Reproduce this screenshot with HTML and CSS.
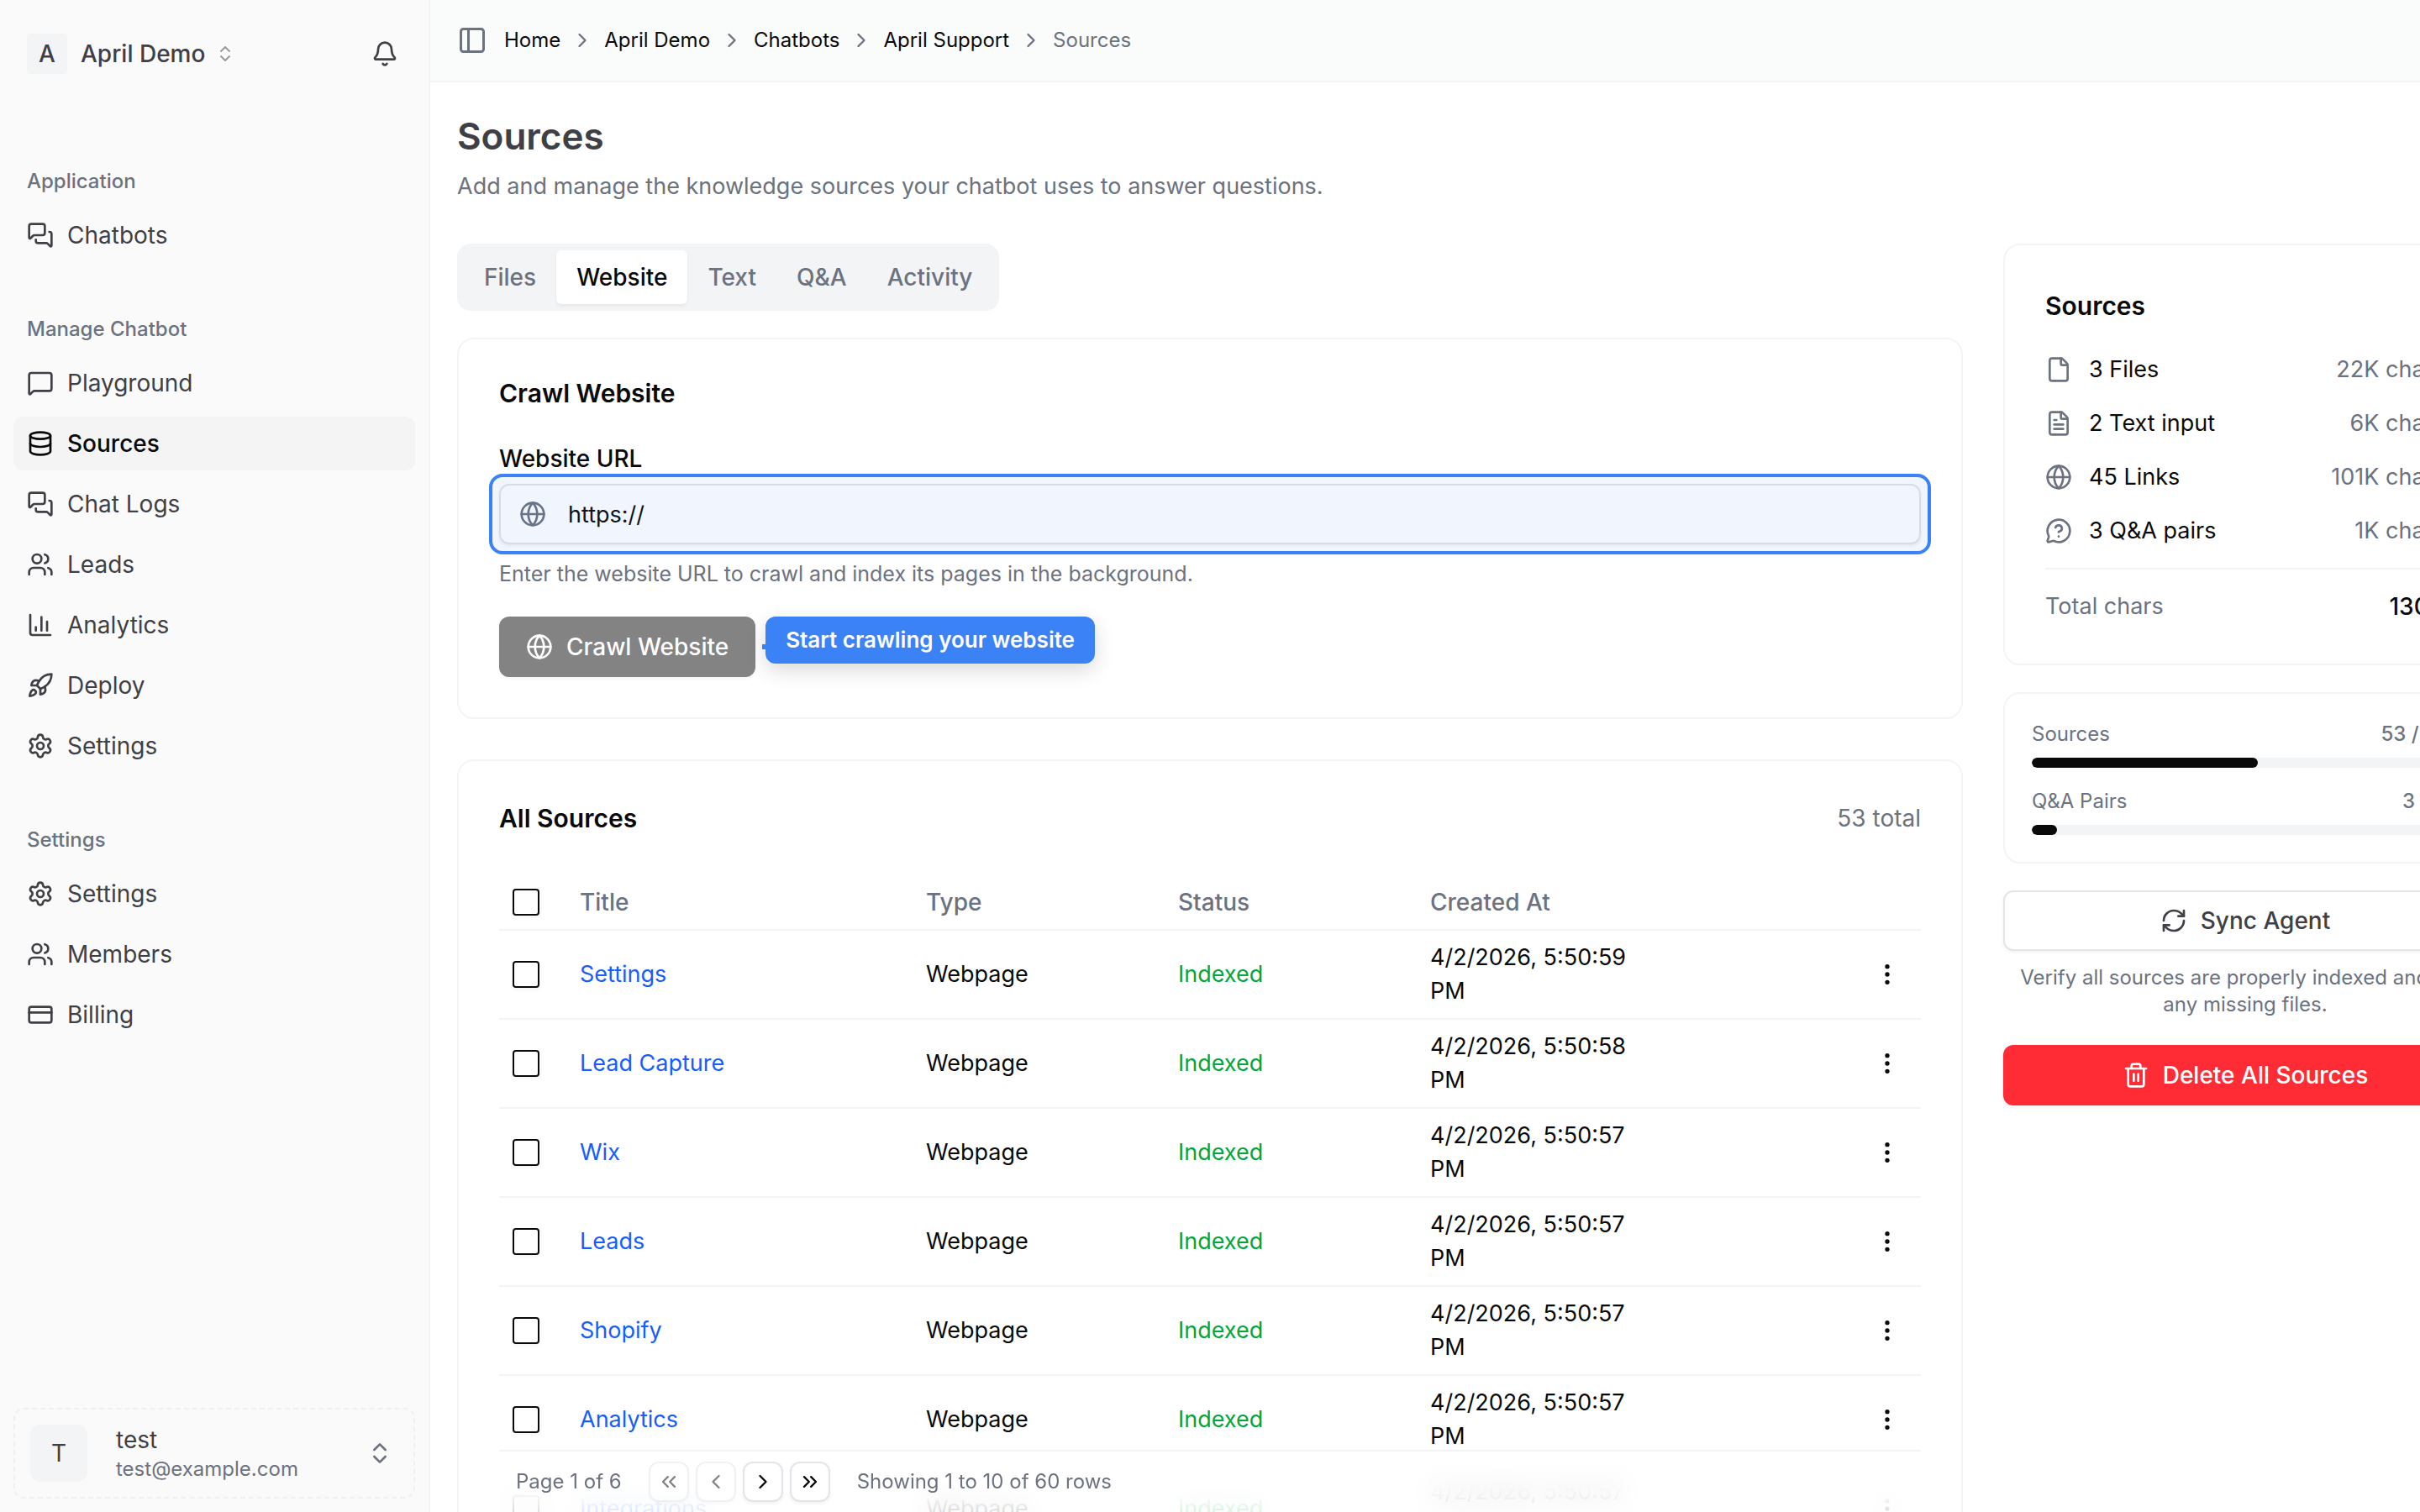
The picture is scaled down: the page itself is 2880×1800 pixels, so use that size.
FILE: index.html
```html
<!DOCTYPE html>
<html lang="en">
<head>
<meta charset="utf-8">
<title>Sources</title>
<link rel="stylesheet" href="styles.css">
</head>
<body>
<svg class="sprite" aria-hidden="true">
  <symbol id="chats" viewBox="0 0 24 24"><path d="M16 10a2 2 0 0 1-2 2H6.828a2 2 0 0 0-1.414.586l-2.202 2.202A.71.71 0 0 1 2 14.286V4a2 2 0 0 1 2-2h10a2 2 0 0 1 2 2z"/><path d="M20 9a2 2 0 0 1 2 2v10.286a.71.71 0 0 1-1.212.502l-2.202-2.202A2 2 0 0 0 17.172 19H10a2 2 0 0 1-2-2v-1"/></symbol>
  <symbol id="chat" viewBox="0 0 24 24"><path d="M22 17a2 2 0 0 1-2 2H6.828a2 2 0 0 0-1.414.586l-2.202 2.202A.71.71 0 0 1 2 21.286V5a2 2 0 0 1 2-2h16a2 2 0 0 1 2 2z"/></symbol>
  <symbol id="database" viewBox="0 0 24 24"><ellipse cx="12" cy="5" rx="9" ry="3"/><path d="M3 5v14a9 3 0 0 0 18 0V5"/><path d="M3 12a9 3 0 0 0 18 0"/></symbol>
  <symbol id="users" viewBox="0 0 24 24"><path d="M16 21v-2a4 4 0 0 0-4-4H6a4 4 0 0 0-4 4v2"/><path d="M16 3.128a4 4 0 0 1 0 7.744"/><path d="M22 21v-2a4 4 0 0 0-3-3.87"/><circle cx="9" cy="7" r="4"/></symbol>
  <symbol id="chart" viewBox="0 0 24 24"><path d="M3 3v16a2 2 0 0 0 2 2h16"/><path d="M18 17V9"/><path d="M13 17V5"/><path d="M8 17v-3"/></symbol>
  <symbol id="rocket" viewBox="0 0 24 24"><path d="M4.5 16.5c-1.5 1.26-2 5-2 5s3.74-.5 5-2c.71-.84.7-2.13-.09-2.91a2.18 2.18 0 0 0-2.91-.09z"/><path d="m12 15-3-3a22 22 0 0 1 2-3.95A12.88 12.88 0 0 1 22 2c0 2.72-.78 7.5-6 11a22.35 22.35 0 0 1-4 2z"/><path d="M9 12H4s.55-3.03 2-4c1.62-1.08 5 0 5 0"/><path d="M12 15v5s3.03-.55 4-2c1.08-1.62 0-5 0-5"/></symbol>
  <symbol id="gear" viewBox="0 0 24 24"><path d="M9.671 4.136a2.34 2.34 0 0 1 4.659 0 2.34 2.34 0 0 0 3.319 1.915 2.34 2.34 0 0 1 2.33 4.033 2.34 2.34 0 0 0 0 3.831 2.34 2.34 0 0 1-2.33 4.033 2.34 2.34 0 0 0-3.319 1.915 2.34 2.34 0 0 1-4.659 0 2.34 2.34 0 0 0-3.32-1.915 2.34 2.34 0 0 1-2.33-4.033 2.34 2.34 0 0 0 0-3.831A2.34 2.34 0 0 1 6.35 6.051a2.34 2.34 0 0 0 3.319-1.915"/><circle cx="12" cy="12" r="3"/></symbol>
  <symbol id="card" viewBox="0 0 24 24"><rect width="20" height="14" x="2" y="5" rx="2"/><path d="M2 10h20"/></symbol>
  <symbol id="updown" viewBox="0 0 24 24"><path d="m7 15 5 5 5-5"/><path d="m7 9 5-5 5 5"/></symbol>
  <symbol id="bell" viewBox="0 0 24 24"><path d="M10.268 21a2 2 0 0 0 3.464 0"/><path d="M3.262 15.326A1 1 0 0 0 4 17h16a1 1 0 0 0 .74-1.673C19.41 13.956 18 12.499 18 8A6 6 0 0 0 6 8c0 4.499-1.411 5.956-2.738 7.326"/></symbol>
  <symbol id="panel" viewBox="0 0 24 24"><rect width="18" height="18" x="3" y="3" rx="2"/><path d="M9 3v18"/></symbol>
  <symbol id="right" viewBox="0 0 24 24"><path d="m9 18 6-6-6-6"/></symbol>
  <symbol id="left" viewBox="0 0 24 24"><path d="m15 18-6-6 6-6"/></symbol>
  <symbol id="first" viewBox="0 0 24 24"><path d="m11 17-5-5 5-5"/><path d="m18 17-5-5 5-5"/></symbol>
  <symbol id="last" viewBox="0 0 24 24"><path d="m6 17 5-5-5-5"/><path d="m13 17 5-5-5-5"/></symbol>
  <symbol id="globe" viewBox="0 0 24 24"><circle cx="12" cy="12" r="10"/><path d="M12 2a14.5 14.5 0 0 0 0 20 14.5 14.5 0 0 0 0-20"/><path d="M2 12h20"/></symbol>
  <symbol id="file" viewBox="0 0 24 24"><path d="M6 22a2 2 0 0 1-2-2V4a2 2 0 0 1 2-2h8a2.4 2.4 0 0 1 1.704.706l3.588 3.588A2.4 2.4 0 0 1 20 8v12a2 2 0 0 1-2 2z"/><path d="M14 2v5a1 1 0 0 0 1 1h5"/></symbol>
  <symbol id="filetext" viewBox="0 0 24 24"><path d="M6 22a2 2 0 0 1-2-2V4a2 2 0 0 1 2-2h8a2.4 2.4 0 0 1 1.704.706l3.588 3.588A2.4 2.4 0 0 1 20 8v12a2 2 0 0 1-2 2z"/><path d="M14 2v5a1 1 0 0 0 1 1h5"/><path d="M10 9H8"/><path d="M16 13H8"/><path d="M16 17H8"/></symbol>
  <symbol id="question" viewBox="0 0 24 24"><path d="M2.992 16.342a2 2 0 0 1 .094 1.167l-1.065 3.29a1 1 0 0 0 1.236 1.168l3.413-.998a2 2 0 0 1 1.099.092 10 10 0 1 0-4.777-4.719"/><path d="M9.09 9a3 3 0 0 1 5.83 1c0 2-3 3-3 3"/><path d="M12 17h.01"/></symbol>
  <symbol id="sync" viewBox="0 0 24 24"><path d="M3 12a9 9 0 0 1 9-9 9.75 9.75 0 0 1 6.74 2.74L21 8"/><path d="M21 3v5h-5"/><path d="M21 12a9 9 0 0 1-9 9 9.75 9.75 0 0 1-6.74-2.74L3 16"/><path d="M8 16H3v5"/></symbol>
  <symbol id="trash" viewBox="0 0 24 24"><path d="M10 11v6"/><path d="M14 11v6"/><path d="M19 6v14a2 2 0 0 1-2 2H7a2 2 0 0 1-2-2V6"/><path d="M3 6h18"/><path d="M8 6V4a2 2 0 0 1 2-2h4a2 2 0 0 1 2 2v2"/></symbol>
  <symbol id="dots" viewBox="0 0 24 24"><circle cx="12" cy="12" r="1"/><circle cx="12" cy="5" r="1"/><circle cx="12" cy="19" r="1"/></symbol>
</svg>
<div class="app">
  <aside class="sidebar">
    <div class="workspace">
      <button class="workspace-button" type="button"><span class="workspace-avatar">A</span>April Demo<svg class="icon icon-small faint"><use href="#updown"/></svg></button>
      <button class="plain" type="button" aria-label="Notifications"><svg class="icon"><use href="#bell"/></svg></button>
    </div>
    <nav class="nav">
      <section class="nav-group">
        <h2 class="nav-label">Application</h2>
        <a class="nav-item" href="#"><svg class="icon"><use href="#chats"/></svg>Chatbots</a>
      </section>
      <section class="nav-group">
        <h2 class="nav-label">Manage Chatbot</h2>
        <a class="nav-item" href="#"><svg class="icon"><use href="#chat"/></svg>Playground</a>
        <a class="nav-item active" href="#"><svg class="icon"><use href="#database"/></svg>Sources</a>
        <a class="nav-item" href="#"><svg class="icon"><use href="#chats"/></svg>Chat Logs</a>
        <a class="nav-item" href="#"><svg class="icon"><use href="#users"/></svg>Leads</a>
        <a class="nav-item" href="#"><svg class="icon"><use href="#chart"/></svg>Analytics</a>
        <a class="nav-item" href="#"><svg class="icon"><use href="#rocket"/></svg>Deploy</a>
        <a class="nav-item" href="#"><svg class="icon"><use href="#gear"/></svg>Settings</a>
      </section>
      <section class="nav-group">
        <h2 class="nav-label">Settings</h2>
        <a class="nav-item" href="#"><svg class="icon"><use href="#gear"/></svg>Settings</a>
        <a class="nav-item" href="#"><svg class="icon"><use href="#users"/></svg>Members</a>
        <a class="nav-item" href="#"><svg class="icon"><use href="#card"/></svg>Billing</a>
      </section>
    </nav>
    <button class="account" type="button">
      <span class="account-avatar">T</span>
      <span class="account-text"><span>test</span><span class="account-mail">test@example.com</span></span>
      <svg class="icon muted"><use href="#updown"/></svg>
    </button>
  </aside>

  <div class="main">
    <header class="topbar">
      <button class="plain muted" type="button" aria-label="Toggle sidebar"><svg class="icon icon-large"><use href="#panel"/></svg></button>
      <nav class="crumbs" aria-label="Breadcrumb">
        <a href="#">Home</a><svg class="icon icon-crumb"><use href="#right"/></svg>
        <a href="#">April Demo</a><svg class="icon icon-crumb"><use href="#right"/></svg>
        <a href="#">Chatbots</a><svg class="icon icon-crumb"><use href="#right"/></svg>
        <a href="#">April Support</a><svg class="icon icon-crumb"><use href="#right"/></svg>
        <span class="crumb-current">Sources</span>
      </nav>
    </header>

    <main class="content">
      <h1 class="title">Sources</h1>
      <p class="subtitle">Add and manage the knowledge sources your chatbot uses to answer questions.</p>

      <div class="columns">
        <div class="primary">
          <div class="tabs" role="tablist">
            <button class="tab" role="tab" type="button">Files</button>
            <button class="tab selected" role="tab" type="button" aria-selected="true">Website</button>
            <button class="tab" role="tab" type="button">Text</button>
            <button class="tab" role="tab" type="button">Q&amp;A</button>
            <button class="tab" role="tab" type="button">Activity</button>
          </div>

          <section class="panel crawl">
            <h2 class="crawl-title">Crawl Website</h2>
            <form class="crawl-form">
              <label class="field-label" for="url">Website URL</label>
              <div class="field">
                <svg class="icon field-icon"><use href="#globe"/></svg>
                <input class="field-input" id="url" type="text" value="https://">
              </div>
              <p class="help">Enter the website URL to crawl and index its pages in the background.</p>
              <div class="crawl-action">
                <button class="button crawl-button" type="button" disabled><svg class="icon"><use href="#globe"/></svg>Crawl Website</button>
                <div class="tip" role="tooltip">Start crawling your website</div>
              </div>
            </form>
          </section>

          <section class="panel list">
            <div class="list-head">
              <h2 class="panel-title">All Sources</h2>
              <span class="list-count">53 total</span>
            </div>
            <table class="table">
              <colgroup><col class="col-check"><col class="col-title"><col class="col-data"><col class="col-data"><col class="col-data"><col class="col-data"></colgroup>
              <thead>
                <tr><th><input class="check" type="checkbox" aria-label="Select all"></th><th>Title</th><th>Type</th><th>Status</th><th>Created At</th><th></th></tr>
              </thead>
              <tbody>
                <tr><td><input class="check" type="checkbox" aria-label="Select Settings"></td><td><a href="#">Settings</a></td><td>Webpage</td><td class="ok">Indexed</td><td>4/2/2026, 5:50:59 PM</td><td class="actions"><button class="row-menu" type="button" aria-label="Row actions"><svg class="icon"><use href="#dots"/></svg></button></td></tr>
                <tr><td><input class="check" type="checkbox" aria-label="Select Lead Capture"></td><td><a href="#">Lead Capture</a></td><td>Webpage</td><td class="ok">Indexed</td><td>4/2/2026, 5:50:58 PM</td><td class="actions"><button class="row-menu" type="button" aria-label="Row actions"><svg class="icon"><use href="#dots"/></svg></button></td></tr>
                <tr><td><input class="check" type="checkbox" aria-label="Select Wix"></td><td><a href="#">Wix</a></td><td>Webpage</td><td class="ok">Indexed</td><td>4/2/2026, 5:50:57 PM</td><td class="actions"><button class="row-menu" type="button" aria-label="Row actions"><svg class="icon"><use href="#dots"/></svg></button></td></tr>
                <tr><td><input class="check" type="checkbox" aria-label="Select Leads"></td><td><a href="#">Leads</a></td><td>Webpage</td><td class="ok">Indexed</td><td>4/2/2026, 5:50:57 PM</td><td class="actions"><button class="row-menu" type="button" aria-label="Row actions"><svg class="icon"><use href="#dots"/></svg></button></td></tr>
                <tr><td><input class="check" type="checkbox" aria-label="Select Shopify"></td><td><a href="#">Shopify</a></td><td>Webpage</td><td class="ok">Indexed</td><td>4/2/2026, 5:50:57 PM</td><td class="actions"><button class="row-menu" type="button" aria-label="Row actions"><svg class="icon"><use href="#dots"/></svg></button></td></tr>
                <tr><td><input class="check" type="checkbox" aria-label="Select Analytics"></td><td><a href="#">Analytics</a></td><td>Webpage</td><td class="ok">Indexed</td><td>4/2/2026, 5:50:57 PM</td><td class="actions"><button class="row-menu" type="button" aria-label="Row actions"><svg class="icon"><use href="#dots"/></svg></button></td></tr>
                <tr><td><input class="check" type="checkbox" aria-label="Select Integrations"></td><td><a href="#">Integrations</a></td><td>Webpage</td><td class="ok">Indexed</td><td>4/2/2026, 5:50:57 PM</td><td class="actions"><button class="row-menu" type="button" aria-label="Row actions"><svg class="icon"><use href="#dots"/></svg></button></td></tr>
              </tbody>
            </table>
            <div class="pager">
              <span>Page 1 of 6</span>
              <div class="pager-buttons">
                <button class="page-button" type="button" aria-label="First page" disabled><svg class="icon icon-page"><use href="#first"/></svg></button>
                <button class="page-button" type="button" aria-label="Previous page" disabled><svg class="icon icon-page"><use href="#left"/></svg></button>
                <button class="page-button" type="button" aria-label="Next page"><svg class="icon icon-page"><use href="#right"/></svg></button>
                <button class="page-button" type="button" aria-label="Last page"><svg class="icon icon-page"><use href="#last"/></svg></button>
              </div>
              <span>Showing 1 to 10 of 60 rows</span>
            </div>
          </section>
        </div>

        <aside class="secondary">
          <section class="panel summary">
            <h2 class="panel-title summary-title">Sources</h2>
            <div class="summary-row"><svg class="icon muted"><use href="#file"/></svg><span>3 Files</span><span class="summary-value">22K chars</span></div>
            <div class="summary-row"><svg class="icon muted"><use href="#filetext"/></svg><span>2 Text input</span><span class="summary-value">6K chars</span></div>
            <div class="summary-row"><svg class="icon muted"><use href="#globe"/></svg><span>45 Links</span><span class="summary-value">101K chars</span></div>
            <div class="summary-row"><svg class="icon muted"><use href="#question"/></svg><span>3 Q&amp;A pairs</span><span class="summary-value">1K chars</span></div>
            <div class="summary-total"><span class="muted">Total chars</span><strong class="total">130K</strong></div>
          </section>
          <section class="panel usage">
            <div class="meter">
              <div class="meter-head"><span>Sources</span><span class="meter-value">53 / 100</span></div>
              <div class="bar"><div class="bar-fill" style="width:53%"></div></div>
            </div>
            <div class="meter">
              <div class="meter-head"><span>Q&amp;A Pairs</span><span class="meter-value">3 / 50</span></div>
              <div class="bar"><div class="bar-fill" style="width:6%"></div></div>
            </div>
          </section>
          <div class="sync">
            <button class="button sync-button" type="button"><svg class="icon"><use href="#sync"/></svg>Sync Agent</button>
            <p class="sync-note">Verify all sources are properly indexed and add any missing files.</p>
          </div>
          <button class="button delete-button" type="button"><svg class="icon"><use href="#trash"/></svg>Delete All Sources</button>
        </aside>
      </div>
    </main>
  </div>
</div>
</body>
</html>
```
FILE: styles.css
```css
* { box-sizing: border-box; }

body {
  margin: 0;
  color: #0a0a0a;
  background: #fff;
  font: 400 27px/40px Inter, "Liberation Sans", sans-serif;
}

h1, h2, p { margin: 0; }
a { color: inherit; text-decoration: none; }
button, input { font: inherit; color: inherit; }
button { border: 0; padding: 0; background: none; }

.sprite { position: absolute; width: 0; height: 0; }

.icon {
  width: 32px;
  height: 32px;
  flex: none;
  display: block;
  fill: none;
  stroke: currentColor;
  stroke-width: 2;
  stroke-linecap: round;
  stroke-linejoin: round;
}
.icon-small { width: 24px; height: 24px; }
.icon-large { width: 36px; height: 36px; }
.icon-crumb, .icon-page { width: 28px; height: 28px; }
.muted { color: #6b7280; }
.faint { opacity: .5; }
.plain { display: flex; }

.app { display: flex; height: 100vh; overflow: hidden; }

/* Sidebar */
.sidebar {
  width: 512px;
  flex: none;
  display: flex;
  flex-direction: column;
  background: #fafafa;
  border-right: 2px solid #f3f4f6;
  color: #3f3f46;
  font-size: 28px;
}
.workspace {
  display: flex;
  align-items: center;
  justify-content: space-between;
  padding: 32px 36px 72px 32px;
}
.workspace-button { display: flex; align-items: center; gap: 16px; height: 64px; font-weight: 500; }
.workspace-button .icon { margin-left: -4px; }
.workspace-avatar {
  width: 48px;
  height: 48px;
  display: grid;
  place-items: center;
  border-radius: 4px;
  background: #f3f4f6;
}
.nav { flex: 1; display: flex; flex-direction: column; gap: 16px; }
.nav-group { display: flex; flex-direction: column; gap: 8px; padding: 16px; }
.nav-label {
  margin-bottom: -8px;
  padding-left: 16px;
  color: #6b7280;
  font-size: 24px;
  font-weight: 500;
  line-height: 64px;
}
.nav-item {
  display: flex;
  align-items: center;
  gap: 16px;
  height: 64px;
  padding: 0 16px;
  border-radius: 12px;
}
.nav-item.active { background: #f4f4f4; color: #0a0a0a; font-weight: 500; }
.account {
  display: flex;
  align-items: center;
  margin: 16px;
  height: 108px;
  padding: 0 24px 0 18px;
  border: 2px dashed #f0f0f1;
  border-radius: 12px;
  text-align: left;
}
.account-avatar {
  width: 68px;
  height: 68px;
  display: grid;
  place-items: center;
  margin-right: 34px;
  border-radius: 12px;
  background: #f3f4f6;
}
.account-text { flex: 1; display: grid; line-height: 38px; }
.account-mail { color: #6b7280; font-size: 24px; line-height: 32px; }

/* Top bar */
.main { flex: 1; min-width: 0; display: flex; flex-direction: column; }
.topbar {
  display: flex;
  align-items: center;
  gap: 20px;
  height: 98px;
  flex: none;
  padding: 0 32px;
  background: #fafcfb;
  border-bottom: 2px solid #f3f4f6;
}
.crumbs { display: flex; align-items: center; gap: 12px; font-size: 24px; }
.crumbs .icon, .crumb-current { color: #6b7280; }

/* Page */
.content { flex: 1; min-height: 0; overflow: hidden; padding: 32px; }
.title { color: #3f3f46; font-size: 44px; font-weight: 600; line-height: 64px; }
.subtitle { margin: 8px 0 48px; color: #6b7280; }
.columns {
  display: grid;
  grid-template-columns: calc(100% - 512px) 576px;
  gap: 48px;
  align-items: start;
}
.primary { display: flex; flex-direction: column; align-items: stretch; }

.tabs {
  align-self: flex-start;
  display: flex;
  height: 80px;
  padding: 8px;
  margin-bottom: 32px;
  border-radius: 16px;
  background: #f3f4f6;
}
.tab { padding: 0 24px; border-radius: 6px; color: #6b7280; font-size: 28px; font-weight: 500; }
.tab.selected { background: #fff; color: #0a0a0a; box-shadow: 0 2px 4px rgb(0 0 0 / 6%); }

.panel { border: 2px solid #f3f4f6; border-radius: 20px; background: #fff; padding: 48px; }
.panel-title, .crawl-title { font-size: 30px; font-weight: 600; }

.crawl { margin-bottom: 48px; }
.crawl-title { line-height: 32px; margin-bottom: 48px; }
.field-label { display: block; font-size: 28px; font-weight: 500; line-height: 28px; margin-bottom: 16px; }
.field { position: relative; display: flex; align-items: center; }
.field::after {
  content: "";
  position: absolute;
  inset: -12px;
  border: 4px solid #3b82f6;
  border-radius: 16px;
  background: rgb(59 130 246 / 8%);
  background-clip: padding-box;
  pointer-events: none;
}
.field-icon { position: absolute; left: 24px; color: #6b7280; }
.field-input {
  flex: 1;
  min-width: 0;
  height: 72px;
  padding: 0 24px 0 80px;
  border: 2px solid #e4e4e9;
  border-radius: 12px;
  background: #fff;
  box-shadow: 0 2px 4px rgb(0 0 0 / 6%);
  outline: 0;
}
.help { margin: 16px 0 32px; color: #6b7280; font-size: 25px; line-height: 38px; }
.crawl-action { position: relative; display: flex; width: max-content; }

.button {
  display: flex;
  align-items: center;
  justify-content: center;
  gap: 16px;
  height: 72px;
  padding: 0 32px;
  border-radius: 12px;
  font-size: 28px;
  font-weight: 500;
  box-shadow: 0 2px 4px rgb(0 0 0 / 5%);
}
.crawl-button { background: #838383; color: #fff; }
.tip {
  position: absolute;
  left: calc(100% + 12px);
  top: 0;
  padding: 0 24px;
  border-radius: 12px;
  background: #3b82f6;
  color: #fff;
  font-size: 26px;
  font-weight: 600;
  line-height: 56px;
  white-space: nowrap;
  box-shadow: 0 8px 24px rgb(0 0 0 / 15%);
}
.tip::before {
  content: "";
  position: absolute;
  left: -4px;
  top: 33px;
  width: 6px;
  height: 6px;
  background: #3b82f6;
}

/* Table */
.list { padding-bottom: 0; }
.list-head { display: flex; justify-content: space-between; margin-bottom: 48px; }
.list-count { color: #6b7280; font-size: 28px; }
.table { width: 100%; table-layout: fixed; border-collapse: separate; border-spacing: 0; text-align: left; }
.col-check { width: 80px; }
.col-title { width: 412px; }
th, td { padding: 12px 16px; border-bottom: 2px solid #f3f4f6; vertical-align: middle; }
th { color: #6b7280; font-size: 28px; font-weight: 500; }
td a { color: #155dfc; }
.ok { color: #00a63e; }
.check {
  appearance: none;
  display: block;
  width: 32px;
  height: 32px;
  margin: 0;
  border: 2px solid #0a0a0a;
  border-radius: 4px;
  background: #fff;
  box-shadow: 0 2px 4px rgb(0 0 0 / 5%);
}
.row-menu { display: grid; place-items: center; width: 48px; height: 48px; margin-left: auto; margin-top: -4px; margin-bottom: -4px; }

.pager {
  position: sticky;
  bottom: -32px;
  display: flex;
  align-items: center;
  gap: 32px;
  height: 74px;
  padding: 0 20px;
  border-top: 2px solid #f3f4f6;
  color: #6b7280;
  font-size: 24px;
}
.pager::before {
  content: "";
  position: absolute;
  inset: 0;
  z-index: -1;
  background: rgb(255 255 255 / 86%);
  backdrop-filter: blur(16px);
  mask-image: linear-gradient(to bottom, #000 50%, rgb(0 0 0 / 90%));
}
.pager-buttons { display: flex; gap: 8px; }
.page-button {
  width: 48px;
  height: 48px;
  display: grid;
  place-items: center;
  border: 2px solid #e4e4e9;
  border-radius: 12px;
  background: #fff;
  color: #0a0a0a;
  box-shadow: 0 2px 4px rgb(0 0 0 / 6%);
}
.page-button:disabled { opacity: .5; }

/* Right column */
.secondary { display: flex; flex-direction: column; gap: 32px; }
.summary { display: flex; flex-direction: column; gap: 24px; }
.summary-title { line-height: 48px; margin-bottom: 8px; }
.summary-row { display: flex; align-items: center; gap: 20px; }
.summary-value { margin-left: auto; color: #6b7280; }
.summary-total {
  display: flex;
  justify-content: space-between;
  padding-top: 24px;
  border-top: 2px solid #f3f4f6;
}
.total { font-size: 28px; font-weight: 500; }
.usage { display: flex; flex-direction: column; gap: 24px; padding: 32px; }
.meter-head { display: flex; justify-content: space-between; margin-bottom: 12px; color: #6b7280; font-size: 24px; line-height: 32px; }
.meter-value { font-weight: 500; }
.bar { height: 12px; border-radius: 6px; background: #f3f4f6; overflow: hidden; }
.bar-fill { height: 100%; border-radius: 6px; background: #0a0a0a; }
.sync { display: flex; flex-direction: column; gap: 16px; }
.sync-button { border: 2px solid #e4e4e9; background: #fff; color: #3f3f46; }
.sync-note { color: #6b7280; font-size: 24px; line-height: 32px; text-align: center; }
.delete-button { background: #ff2c36; color: #fff; }
```
